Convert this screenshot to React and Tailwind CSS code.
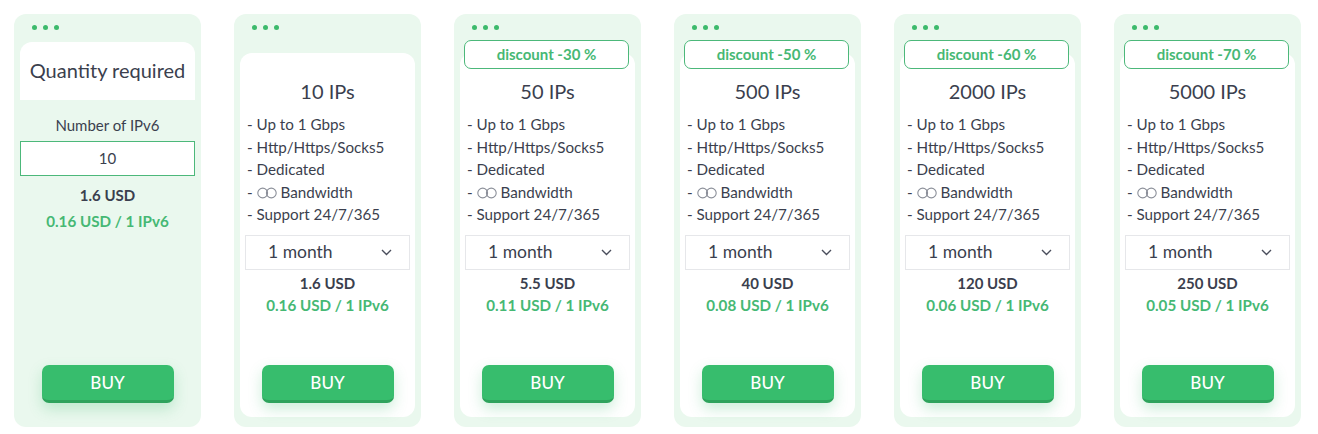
import React from "react";

const plans = [
  { ips: "10 IPs", discount: null, price: "1.6 USD", per: "0.16 USD / 1 IPv6" },
  { ips: "50 IPs", discount: "discount -30 %", price: "5.5 USD", per: "0.11 USD / 1 IPv6" },
  { ips: "500 IPs", discount: "discount -50 %", price: "40 USD", per: "0.08 USD / 1 IPv6" },
  { ips: "2000 IPs", discount: "discount -60 %", price: "120 USD", per: "0.06 USD / 1 IPv6" },
  { ips: "5000 IPs", discount: "discount -70 %", price: "250 USD", per: "0.05 USD / 1 IPv6" },
];

const Dots = () => (
  <div className="flex gap-[6px] pl-[12px] pt-[11px]">
    <span className="w-[5px] h-[5px] rounded-full bg-[#3dba6c]" />
    <span className="w-[5px] h-[5px] rounded-full bg-[#3dba6c]" />
    <span className="w-[5px] h-[5px] rounded-full bg-[#3dba6c]" />
  </div>
);

const Infinity = () => (
  <svg width="20" height="12" viewBox="0 0 20 12" className="inline-block mr-[4px] -mt-[2px]">
    <circle cx="5.7" cy="6" r="4.9" fill="none" stroke="#8b8f99" strokeWidth="1.1" />
    <circle cx="14.3" cy="6" r="4.9" fill="none" stroke="#8b8f99" strokeWidth="1.1" />
  </svg>
);

const BuyButton = () => (
  <button className="mx-auto w-[132px] h-[38px] rounded-[7px] bg-[#37bd6d] border-b-[3px] border-[#2ea35c] text-white text-[17px] font-medium shadow-[0_6px_14px_rgba(55,189,109,0.25)]">
    BUY
  </button>
);

const Price = ({ price, per, className = "", gap = "" }) => (
  <div className={`text-center ${className}`}>
    <div className="text-[15px] font-bold text-[#3b3f4e] leading-[22px]">{price}</div>
    <div className={`text-[15.2px] font-bold text-[#46b874] leading-[22px] ${gap}`}>{per}</div>
  </div>
);

const PlanCard = ({ plan }) => (
  <div className="relative w-[187px] h-[413px] shrink-0 rounded-[12px] bg-[#eaf8ee] px-[6px] pb-[10px] flex flex-col">
    <Dots />
    {plan.discount && (
      <div className="absolute left-[10px] top-[26px] w-[165px] h-[29px] rounded-[7px] border border-[#4cb87a] bg-white flex items-center justify-center text-[15px] font-bold text-[#46b874]">
        {plan.discount}
      </div>
    )}
    <div className="mt-[23px] flex-1 rounded-[12px] bg-white flex flex-col">
      <div className="pt-[26px] text-center text-[20px] leading-[24px] text-[#3b3f4e]">{plan.ips}</div>
      <ul className="mt-[10px] pl-[7px] text-[15.2px] leading-[22.5px] text-[#3b3f4e]">
        <li>- Up to 1 Gbps</li>
        <li>- Http/Https/Socks5</li>
        <li>- Dedicated</li>
        <li>- <Infinity />Bandwidth</li>
        <li>- Support 24/7/365</li>
      </ul>
      <div className="mx-[5px] mt-[9px] h-[35px] border border-[#e6e7ea] flex items-center justify-between pl-[22px] pr-[17px] text-[17.5px] text-[#3b3f4e]">
        <span className="mt-[1px]">1 month</span>
        <svg width="11" height="7" viewBox="0 0 11 7">
          <path d="M1 1l4.5 4.5L10 1" fill="none" stroke="#4a4e5c" strokeWidth="1.4" />
        </svg>
      </div>
      <Price price={plan.price} per={plan.per} className="mt-[2px]" />
      <div className="mt-auto mb-[14px] flex">
        <BuyButton />
      </div>
    </div>
  </div>
);

export default function App() {
  return (
    <div className="w-[1318px] h-[434px] bg-white flex gap-[33px] pl-[14px] pt-[14px] font-['Lato',sans-serif]">
      <div className="w-[187px] h-[413px] shrink-0 rounded-[12px] bg-[#eaf8ee] px-[6px] pb-[24px] flex flex-col">
        <Dots />
        <div className="mt-[12px] h-[58px] rounded-t-[12px] bg-white flex items-center justify-center pb-[2px] text-[20px] text-[#3b3f4e]">
          Quantity required
        </div>
        <div className="mt-[14px] text-center text-[15px] leading-[22px] text-[#3b3f4e]">Number of IPv6</div>
        <div className="mt-[5px] h-[35px] border border-[#4cb87a] bg-white flex items-center justify-center text-[15px] text-[#3b3f4e]">
          10
        </div>
        <Price price="1.6 USD" per="0.16 USD / 1 IPv6" className="mt-[8px]" gap="mt-[4px]" />
        <div className="mt-auto flex">
          <BuyButton />
        </div>
      </div>
      {plans.map((p) => (
        <PlanCard key={p.ips} plan={p} />
      ))}
    </div>
  );
}
